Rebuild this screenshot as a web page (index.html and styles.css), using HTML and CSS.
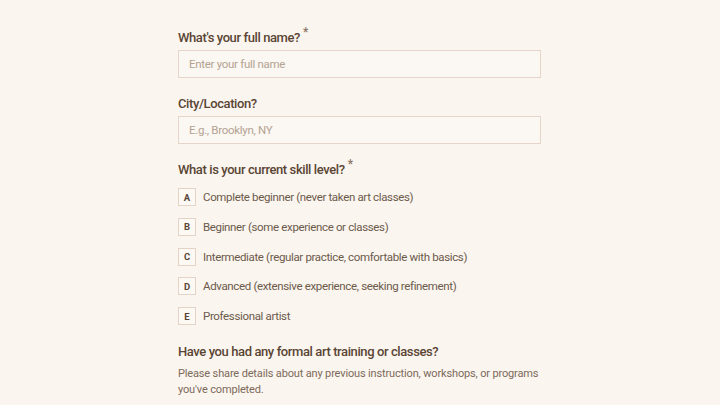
FILE: index.html
```html
<!DOCTYPE html>
<html lang="en">
<head>
<meta charset="utf-8">
<link rel="stylesheet" href="styles.css">
</head>
<body>
<form class="form">
  <div class="field">
    <label class="label">What's your full name?<span class="req">*</span></label>
    <input class="input" type="text" placeholder="Enter your full name">
  </div>
  <div class="field">
    <label class="label">City/Location?</label>
    <input class="input" type="text" placeholder="E.g., Brooklyn, NY">
  </div>
  <div class="field field-options">
    <div class="label">What is your current skill level?<span class="req">*</span></div>
    <div class="options">
      <div class="option"><span class="key">A</span><span class="opt-text">Complete beginner (never taken art classes)</span></div>
      <div class="option"><span class="key">B</span><span class="opt-text">Beginner (some experience or classes)</span></div>
      <div class="option"><span class="key">C</span><span class="opt-text">Intermediate (regular practice, comfortable with basics)</span></div>
      <div class="option"><span class="key">D</span><span class="opt-text">Advanced (extensive experience, seeking refinement)</span></div>
      <div class="option"><span class="key">E</span><span class="opt-text">Professional artist</span></div>
    </div>
  </div>
  <div class="field field-last">
    <div class="label">Have you had any formal art training or classes?</div>
    <p class="desc">Please share details about any previous instruction, workshops, or programs you've completed.</p>
    <div class="textarea"></div>
  </div>
</form>
</body>
</html>
```
FILE: styles.css
```css
html, body {
  margin: 0;
  padding: 0;
  background: #faf5ef;
  height: 405px;
  overflow: hidden;
}
body {
  font-family: Roboto, "Noto Sans", sans-serif;
  color: #5b4738;
}
.form {
  width: 363px;
  margin-left: 178px;
  padding-top: 28px;
  display: flex;
  flex-direction: column;
  gap: 16px;
}
.field {
  display: flex;
  flex-direction: column;
  gap: 2px;
}
.label {
  font-size: 13px;
  font-weight: 500;
  line-height: 20px;
  height: 20px;
  color: #5a4535;
  letter-spacing: -0.4px;
}
.req {
  position: relative;
  top: -6px;
  font-size: 12px;
  margin-left: 3px;
  color: #8a7362;
}
.input {
  box-sizing: border-box;
  height: 28px;
  width: 363px;
  margin: 0;
  border: 1px solid #e6d6c9;
  background: #fbf7f2;
  padding: 0 10px;
  font-family: inherit;
  font-size: 11.5px;
  letter-spacing: -0.3px;
  color: #5b4738;
  outline: none;
}
.input::placeholder {
  color: #b3a393;
}
.field-options {
  gap: 8px;
}
.options {
  display: flex;
  flex-direction: column;
  gap: 11.75px;
}
.option {
  display: flex;
  align-items: center;
  gap: 7px;
  height: 18px;
}
.key {
  box-sizing: border-box;
  width: 18px;
  height: 18px;
  border: 1px solid #e3d4c7;
  background: #fcf9f5;
  display: flex;
  align-items: center;
  justify-content: center;
  font-size: 9.5px;
  font-weight: 700;
  color: #5a4535;
}
.opt-text {
  font-size: 11.5px;
  letter-spacing: -0.35px;
  color: #6c5a4b;
}
.field-last {
  margin-top: 1px;
  gap: 4px;
}
.desc {
  margin: 0;
  font-size: 11px;
  letter-spacing: -0.15px;
  line-height: 16px;
  color: #7d6a5a;
}
.textarea {
  margin-top: 5px;
  height: 40px;
  border: 1px solid #e6d6c9;
  background: #fbf7f2;
}
```
